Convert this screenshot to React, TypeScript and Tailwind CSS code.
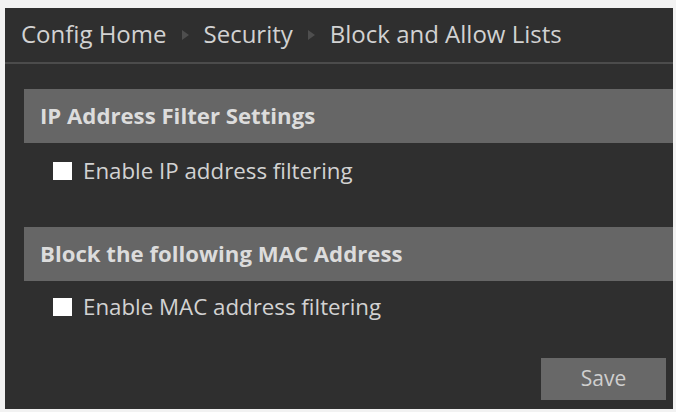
import React from "react";

const Arrow = () => (
  <svg width="7" height="10" viewBox="0 0 7 10" className="mx-[15px] mt-[2px]">
    <polygon points="0,0 7,5 0,10" fill="#4e4e4e" />
  </svg>
);

const Check = () => <div className="w-[19px] h-[18px] bg-white shrink-0" />;

export default function App() {
  return (
    <div
      className="w-[676px] h-[412px] bg-[#f2f2f2] pt-[8px] pl-[5px] pr-[3px] pb-[3px]"
      style={{ fontFamily: '"Open Sans", "Noto Sans", sans-serif' }}
    >
      <div className="h-[401px] bg-[#2f2f2f] flex flex-col">
        <div className="h-[56px] flex items-center pl-[16px] pb-[2px] border-b-2 border-[#4c4c4c] text-[24px] text-[#d2d2d2]">
          <span>Config Home</span>
          <Arrow />
          <span>Security</span>
          <Arrow />
          <span>Block and Allow Lists</span>
        </div>
        <div className="pl-[19px] pt-[25px] flex flex-col flex-1">
          <div className="h-[54px] bg-[#666666] flex items-center pl-[16px] text-[22.2px] font-bold text-[#dcdcdc]">
            IP Address Filter Settings
          </div>
          <div className="h-[56px] flex items-center pl-[29px] gap-[11px] text-[22.3px] text-[#d2d2d2]">
            <Check />
            <span>Enable IP address filtering</span>
          </div>
          <div className="h-[54px] mt-[28px] bg-[#666666] flex items-center pl-[16px] text-[22.2px] font-bold text-[#dcdcdc]">
            Block the following MAC Address
          </div>
          <div className="h-[52px] flex items-center pl-[29px] gap-[11px] text-[22.3px] text-[#d2d2d2]">
            <Check />
            <span>Enable MAC address filtering</span>
          </div>
          <div className="flex justify-end pr-[7px] mt-[25px]">
            <div className="w-[125px] h-[42px] bg-[#686868] flex items-center justify-center text-[21px] text-[#cfcfcf]">
              Save
            </div>
          </div>
        </div>
      </div>
    </div>
  );
}
